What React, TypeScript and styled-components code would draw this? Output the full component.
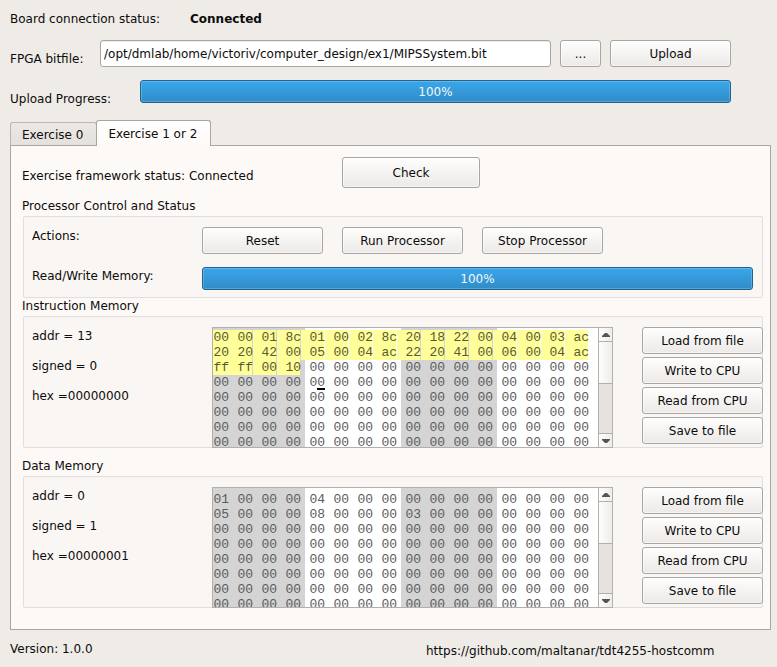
import React, { useState } from "react";
import styled, { createGlobalStyle, css } from "styled-components";

const GlobalStyle = createGlobalStyle`
  * { box-sizing: border-box; }
  body {
    margin: 0;
    background: #efebe7;
    color: #0c0c0c;
    font: 12px/18px "DejaVu Sans", sans-serif;
  }
  button, input { font: inherit; color: inherit; }
`;

const Window = styled.main`
  padding: 10px 6px 8px 10px;
`;

const ConnectionForm = styled.form`
  display: flex;
  flex-direction: column;
  gap: 12px;
  padding-right: 40px;
`;

const FormRow = styled.div<{ $tall?: boolean }>`
  display: flex;
  align-items: flex-start;
  min-height: ${(p) => (p.$tall ? 28 : 18)}px;
`;

const FieldLabel = styled.label<{ $width: number; $low?: boolean }>`
  flex: none;
  width: ${(p) => p.$width}px;
  padding-top: ${(p) => (p.$low ? 10 : 0)}px;
`;

const PathInput = styled.input`
  flex: 1;
  min-width: 0;
  height: 27px;
  padding: 0 3px;
  background: #fff;
  border: 1px solid #a9a5a2;
  border-radius: 3px;
  box-shadow: inset 0 1px 0 #efedeb;
`;

const Button = styled.button<{ $width: number; $height?: number; $gap?: number }>`
  flex: none;
  width: ${(p) => p.$width}px;
  height: ${(p) => p.$height ?? 27}px;
  margin-left: ${(p) => p.$gap ?? 0}px;
  padding: 0;
  border: 1px solid #a9a5a2;
  border-radius: 3px;
  background: linear-gradient(#fefefe, #ece9e6);
  box-shadow: inset 0 0 0 1px rgba(255, 255, 255, 0.5);
`;

const ProgressTrack = styled.div`
  position: relative;
  flex: 1;
  height: 23px;
  border-radius: 3px;
  background: #fff;
`;

const ProgressFill = styled.div`
  height: 100%;
  border: 1px solid #1e648f;
  border-radius: 3px;
  background: linear-gradient(#3ba6ec, #308cc6);
  box-shadow: inset 0 0 0 1px rgba(255, 255, 255, 0.2);
`;

const ProgressText = styled.span`
  position: absolute;
  inset: 0;
  text-align: center;
  line-height: 24px;
  color: #f3f8fc;
`;

function Progress({ value, label }: { value: number; label: string }) {
  return (
    <ProgressTrack role="progressbar" aria-label={label} aria-valuenow={value}>
      <ProgressFill style={{ width: `${value}%` }} />
      <ProgressText>{value}%</ProgressText>
    </ProgressTrack>
  );
}

const TabStrip = styled.div`
  display: flex;
  align-items: flex-end;
  height: 26px;
  margin-top: 12px;
`;

const Tab = styled.button<{ $active: boolean }>`
  padding: 0 13px 0 11px;
  border: 1px solid #a9a5a2;
  border-radius: 3px 3px 0 0;
  ${(p) =>
    p.$active
      ? css`
          height: 26px;
          margin-left: -1px;
          border-bottom: 0;
          background: linear-gradient(#ffffff, #fdf9f6);
        `
      : css`
          height: 24px;
          padding-top: 1px;
          background: linear-gradient(#ebe8e5, #e5e1dd);
          border-color: #b9b5b2;
          border-bottom-color: #a9a5a2;
        `}
`;

const Panel = styled.section`
  margin-top: -1px;
  padding: 11px 7px 21px 11px;
  border: 1px solid #a9a5a2;
  background: #fdf9f6;
`;

/* The strip is painted above the panel so that the open tab hides the frame. */
const Raised = styled.div`
  position: relative;
  z-index: 1;
`;

const CheckRow = styled.div`
  display: flex;
  align-items: center;
  height: 31px;
  margin-bottom: 10px;
`;

const CheckStatus = styled.span`
  width: 320px;
  padding-top: 6px;
`;

const GroupTitle = styled.h2`
  margin: 0;
  padding-bottom: 2px;
  font-size: 12px;
  line-height: 16px;
  font-weight: normal;
`;

const Group = styled.div`
  margin-left: 1px;
  padding: 11px 0 0 9px;
  border-radius: 2px;
  background: #faf6f3;
  box-shadow: inset 0 0 0 1px #e1dedb;
`;

const ControlGroup = styled(Group)`
  display: flex;
  flex-direction: column;
  gap: 13px;
  padding-right: 10px;
  padding-bottom: 8px;
`;

const ControlRow = styled.div`
  display: flex;
  align-items: flex-start;
`;

const ControlLabel = styled.span`
  flex: none;
  width: 170px;
`;

const ButtonRow = styled.div`
  display: flex;
  gap: 19px;
`;

const MemoryGroup = styled(Group)`
  display: flex;
  align-items: flex-start;
  &:not(:last-child) {
    margin-bottom: 10px;
  }
`;

const Readout = styled.div`
  display: flex;
  flex-direction: column;
  gap: 12px;
  width: 180px;
`;

const MemoryButtons = styled.div`
  display: flex;
  flex-direction: column;
  gap: 3px;
  margin-left: auto;
`;

const HexView = styled.div`
  display: flex;
  width: 401px;
  height: 121px;
  border: 1px solid #b3afac;
  background: #fff;
`;

const HexArea = styled.div<{ $top: number }>`
  flex: 1;
  overflow: hidden;
  padding-top: ${(p) => p.$top}px;
  background: linear-gradient(
    to right,
    #d4d4d4 92px,
    #fff 92px 188px,
    #d4d4d4 188px 284px,
    #fff 284px
  );
`;

const HexTable = styled.table`
  border-collapse: collapse;
  table-layout: fixed;
  width: 376px;
  font: 13px/15px "Liberation Mono", monospace;
  color: #5c5c5c;
`;

const HexCell = styled.td<{ $marked: boolean; $cursor: boolean }>`
  width: 24px;
  height: 15px;
  padding: 0;
  text-align: right;
  &:first-child {
    width: 16px;
  }
  ${(p) =>
    p.$marked &&
    css`
      color: #5a5a30;
      background: linear-gradient(#ffff99, #ffff99) no-repeat 0 0 / calc(100% - 1px) 100%;
      &:first-child {
        background-size: 100% 100%;
      }
    `}
  ${(p) =>
    p.$cursor &&
    css`
      position: relative;
      &::after {
        content: "";
        position: absolute;
        right: 0;
        bottom: 0;
        width: 8px;
        height: 2px;
        background: #000;
      }
    `}
`;

const ScrollBar = styled.div`
  display: flex;
  flex-direction: column;
  width: 14px;
  border-left: 1px solid #b3afac;
  background: #e6e2df;
`;

const ScrollButton = styled.button`
  display: flex;
  align-items: center;
  justify-content: center;
  height: 14px;
  padding: 0;
  border: 0 solid #b3afac;
  background: linear-gradient(to right, #fdfdfc, #efedea);
  &:first-child {
    border-bottom-width: 1px;
  }
  &:last-child {
    border-top-width: 1px;
    margin-top: auto;
  }
`;

const ScrollThumb = styled.div`
  height: 42px;
  border-bottom: 1px solid #b3afac;
  background: linear-gradient(to right, #fdfdfc, #efedea);
`;

const Footer = styled.footer`
  display: flex;
  padding-top: 10px;
`;

const Version = styled.span`
  flex: 416 1 0;
`;

const ProjectLink = styled.a`
  flex: 345 1 0;
  padding-top: 2px;
  color: inherit;
  text-decoration: none;
`;

function Arrow({ down }: { down?: boolean }) {
  return (
    <svg width="8" height="4" viewBox="0 0 8 4" aria-hidden="true">
      <path d={down ? "M0 0h8v1L5 4H3L0 1z" : "M0 4h8V3L5 0H3L0 3z"} fill="#555" />
    </svg>
  );
}

const COLUMNS = 16;
const ROWS = 8;

function parseRows(lines: string[]): string[][] {
  return Array.from({ length: ROWS }, (_, r) => {
    const bytes = lines[r] ? lines[r].split(" ") : [];
    return Array.from({ length: COLUMNS }, (_, c) => bytes[c] ?? "00");
  });
}

interface Memory {
  title: string;
  readout: string[];
  rows: string[][];
  marked: number;
  cursor: number;
  top: number;
}

const memories: Memory[] = [
  {
    title: "Instruction Memory",
    readout: ["addr = 13", "signed = 0", "hex =00000000"],
    rows: parseRows([
      "00 00 01 8c 01 00 02 8c 20 18 22 00 04 00 03 ac",
      "20 20 42 00 05 00 04 ac 22 20 41 00 06 00 04 ac",
      "ff ff 00 10",
    ]),
    marked: 36,
    cursor: 52,
    top: 2,
  },
  {
    title: "Data Memory",
    readout: ["addr = 0", "signed = 1", "hex =00000001"],
    rows: parseRows([
      "01 00 00 00 04",
      "05 00 00 00 08 00 00 00 03",
    ]),
    marked: 0,
    cursor: -1,
    top: 4,
  },
];

const memoryActions = ["Load from file", "Write to CPU", "Read from CPU", "Save to file"];

function MemorySection({ memory }: { memory: Memory }) {
  return (
    <>
      <GroupTitle>{memory.title}</GroupTitle>
      <MemoryGroup>
        <Readout>
          {memory.readout.map((line) => (
            <span key={line}>{line}</span>
          ))}
        </Readout>
        <HexView>
          <HexArea $top={memory.top}>
            <HexTable aria-label={memory.title}>
              <tbody>
                {memory.rows.map((row, r) => (
                  <tr key={r}>
                    {row.map((byte, c) => {
                      const index = r * COLUMNS + c;
                      return (
                        <HexCell
                          key={c}
                          $marked={index < memory.marked}
                          $cursor={index === memory.cursor}
                        >
                          {byte}
                        </HexCell>
                      );
                    })}
                  </tr>
                ))}
              </tbody>
            </HexTable>
          </HexArea>
          <ScrollBar>
            <ScrollButton type="button" aria-label="Scroll up">
              <Arrow />
            </ScrollButton>
            <ScrollThumb />
            <ScrollButton type="button" aria-label="Scroll down">
              <Arrow down />
            </ScrollButton>
          </ScrollBar>
        </HexView>
        <MemoryButtons>
          {memoryActions.map((action) => (
            <Button type="button" key={action} $width={121}>
              {action}
            </Button>
          ))}
        </MemoryButtons>
      </MemoryGroup>
    </>
  );
}

export default function App() {
  const [path, setPath] = useState(
    "/opt/dmlab/home/victoriv/computer_design/ex1/MIPSSystem.bit"
  );

  return (
    <>
      <GlobalStyle />
      <Window>
        <ConnectionForm onSubmit={(e: React.FormEvent) => e.preventDefault()}>
          <FormRow>
            <FieldLabel as="span" $width={180}>
              Board connection status:
            </FieldLabel>
            <strong>Connected</strong>
          </FormRow>
          <FormRow $tall>
            <FieldLabel htmlFor="bitfile" $width={90} $low>
              FPGA bitfile:
            </FieldLabel>
            <PathInput
              id="bitfile"
              type="text"
              value={path}
              onChange={(e) => setPath(e.target.value)}
            />
            <Button type="button" $width={41} $gap={9}>
              ...
            </Button>
            <Button type="submit" $width={121} $gap={9}>
              Upload
            </Button>
          </FormRow>
          <FormRow $tall>
            <FieldLabel as="span" $width={130} $low>
              Upload Progress:
            </FieldLabel>
            <Progress value={100} label="Upload Progress" />
          </FormRow>
        </ConnectionForm>

        <Raised>
          <TabStrip role="tablist">
            <Tab type="button" role="tab" aria-selected={false} $active={false}>
              Exercise 0
            </Tab>
            <Tab type="button" role="tab" aria-selected $active>
              Exercise 1 or 2
            </Tab>
          </TabStrip>
        </Raised>
        <Panel role="tabpanel">
          <CheckRow>
            <CheckStatus>Exercise framework status: Connected</CheckStatus>
            <Button type="button" $width={138} $height={31}>
              Check
            </Button>
          </CheckRow>
          <GroupTitle>Processor Control and Status</GroupTitle>
          <ControlGroup>
            <ControlRow>
              <ControlLabel>Actions:</ControlLabel>
              <ButtonRow>
                <Button type="button" $width={121}>Reset</Button>
                <Button type="button" $width={121}>Run Processor</Button>
                <Button type="button" $width={121}>Stop Processor</Button>
              </ButtonRow>
            </ControlRow>
            <ControlRow>
              <ControlLabel>Read/Write Memory:</ControlLabel>
              <Progress value={100} label="Read/Write Memory" />
            </ControlRow>
          </ControlGroup>
          {memories.map((memory) => (
            <MemorySection key={memory.title} memory={memory} />
          ))}
        </Panel>

        <Footer>
          <Version>Version: 1.0.0</Version>
          <ProjectLink href="https://github.com/maltanar/tdt4255-hostcomm">
            https://github.com/maltanar/tdt4255-hostcomm
          </ProjectLink>
        </Footer>
      </Window>
    </>
  );
}
